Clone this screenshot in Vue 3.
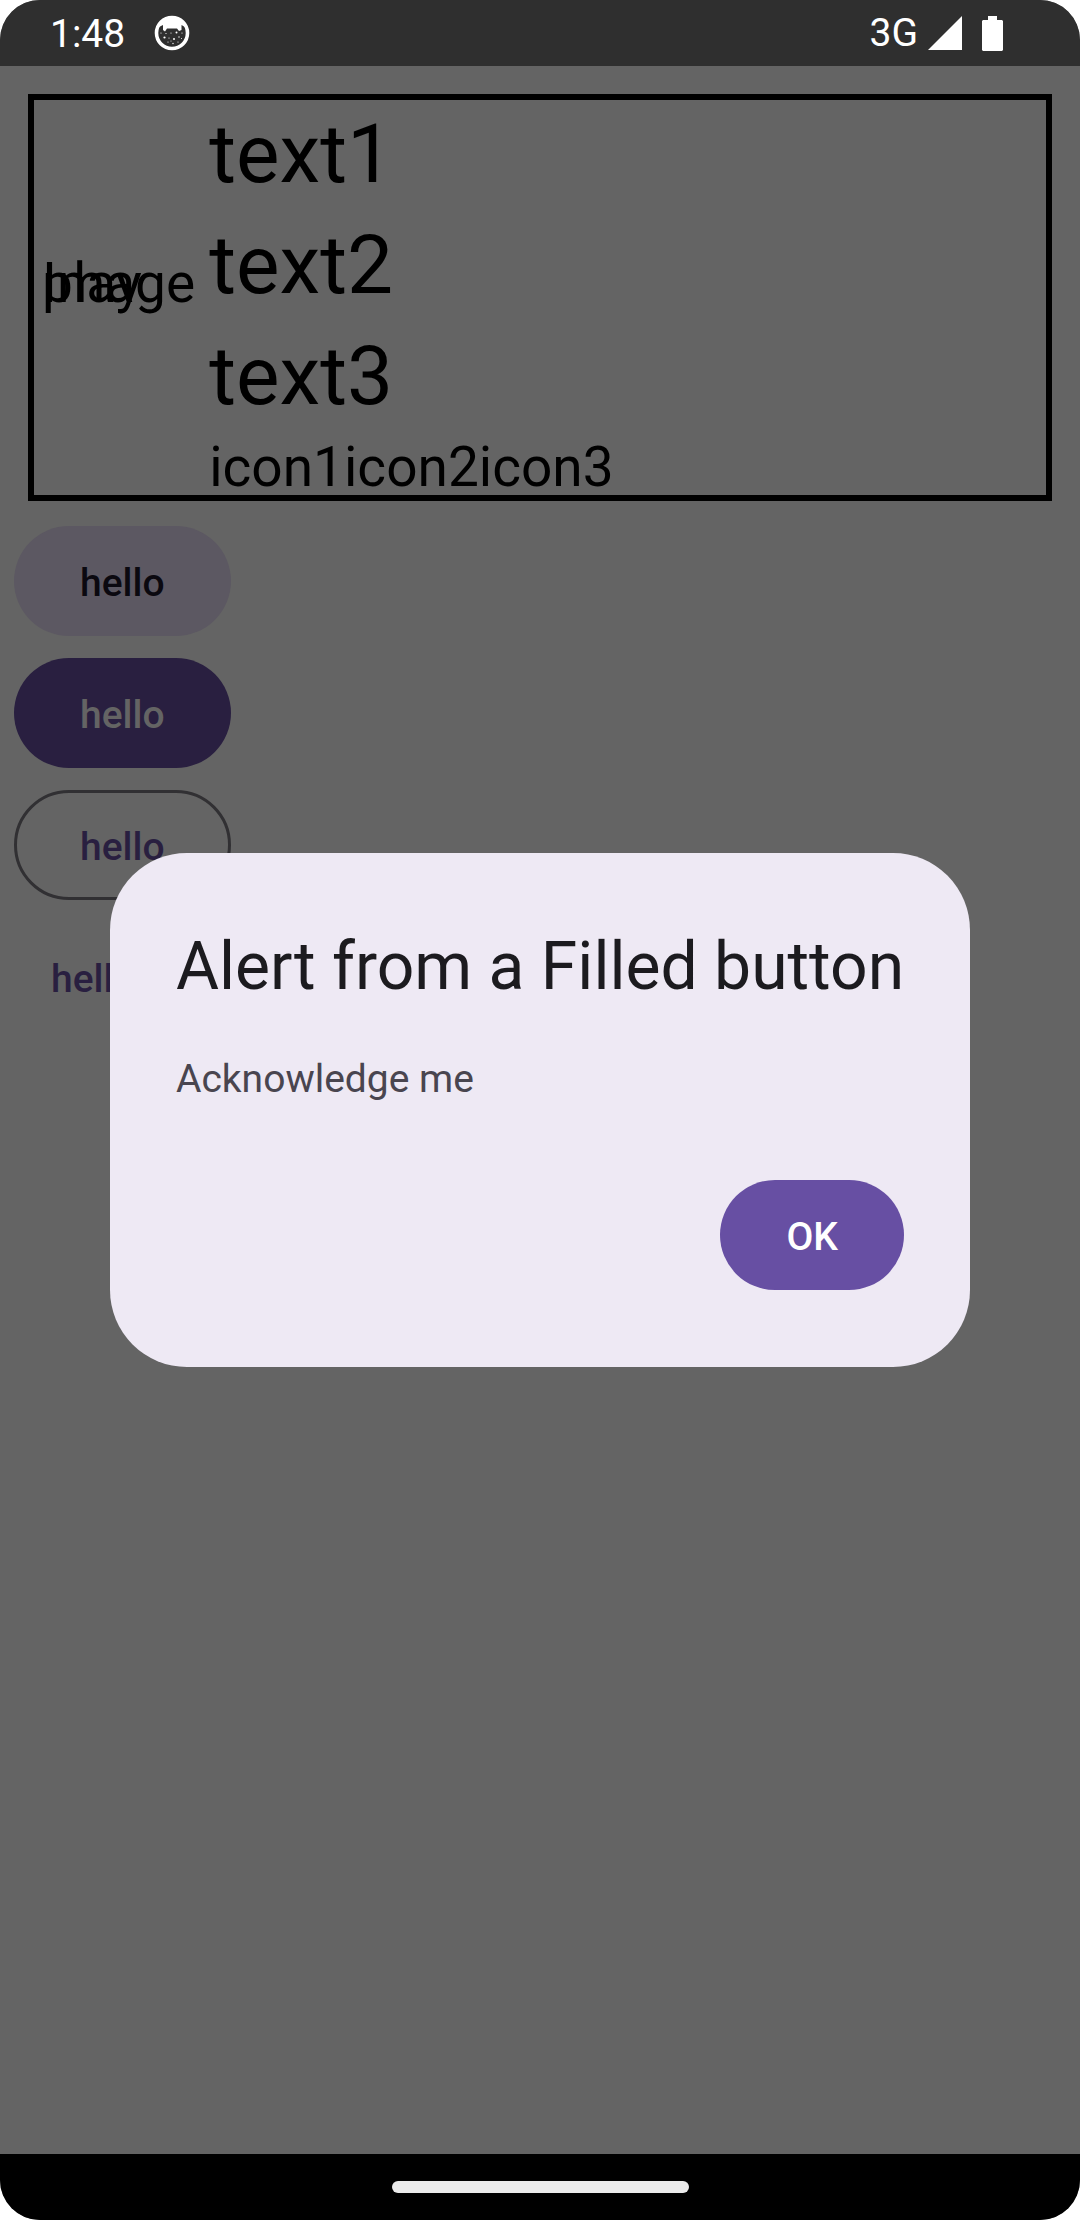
<script setup>
import { ref } from 'vue'

const overlays = ['Image', 'play']
const texts = ['text1', 'text2', 'text3']
const icons = ['icon1', 'icon2', 'icon3']
const buttons = [
  { kind: 'tonal', label: 'hello' },
  { kind: 'filled', label: 'hello' },
  { kind: 'outlined', label: 'hello' },
  { kind: 'plain', label: 'hello' }
]
const open = ref(true)
</script>

<template>
  <div class="screen">
    <header class="status">
      <div class="group">
        <time class="clock">1:48</time>
        <svg class="cat" viewBox="0 0 36 36" aria-hidden="true">
          <circle cx="18" cy="18" r="15.5" fill="none" stroke="#fff" stroke-width="3.6" />
          <path d="M5 12 Q8 2 18 1.500 Q28 2 31 12 L27.500 10 L27.500 15 L25 16 L23 13.500 H13 L11 16.500 L9 15 L9 10 Z" fill="#fff" />
          <g fill="#fff">
            <circle cx="10.500" cy="22.500" r="1.100" /><circle cx="22.500" cy="17.500" r="1" />
            <circle cx="17" cy="18" r=".6" /><circle cx="15" cy="23" r=".6" />
            <circle cx="20" cy="24" r="1" /><circle cx="25" cy="22" r=".7" />
            <circle cx="28" cy="18" r=".6" /><circle cx="7" cy="18" r=".6" />
            <circle cx="12" cy="18.500" r=".6" /><circle cx="14" cy="27" r=".6" />
            <circle cx="19" cy="28.500" r=".7" /><circle cx="24" cy="27" r=".6" />
            <circle cx="27.500" cy="23.500" r=".5" /><circle cx="17" cy="26" r=".5" />
          </g>
        </svg>
      </div>
      <div class="group">
        <span class="network">3G</span>
        <svg class="signal" viewBox="0 0 34 34" aria-hidden="true"><path d="M34 0V34H0Z" fill="#fff" /></svg>
        <svg class="battery" viewBox="0 0 21 35" aria-hidden="true">
          <path d="M6 0H15V4H20L21 5V34L20 35H1L0 34V5L1 4H6Z" fill="#fff" />
        </svg>
      </div>
    </header>

    <main class="content">
      <section class="card">
        <div class="stack">
          <span v-for="o in overlays" :key="o">{{ o }}</span>
        </div>
        <div class="column">
          <p v-for="t in texts" :key="t" class="line">{{ t }}</p>
          <p class="icons"><span v-for="i in icons" :key="i">{{ i }}</span></p>
        </div>
      </section>
      <div class="buttons">
        <button v-for="b in buttons" :key="b.kind" type="button" class="btn" :class="b.kind" @click="open = true">{{ b.label }}</button>
      </div>
    </main>

    <footer class="nav"><div class="pill"></div></footer>

    <div v-if="open" class="overlay">
      <section class="dialog" role="alertdialog" aria-labelledby="dialog-title" aria-describedby="dialog-text">
        <h1 id="dialog-title">Alert from a Filled button</h1>
        <p id="dialog-text">Acknowledge me</p>
        <div class="actions">
          <button type="button" class="btn ok" @click="open = false">OK</button>
        </div>
      </section>
    </div>
  </div>
</template>

<style>
body { margin: 0; background: #fff; }
</style>

<style scoped>
.screen {
  position: relative;
  display: flex;
  flex-direction: column;
  min-height: 100vh;
  box-sizing: border-box;
  border-radius: 40px;
  overflow: hidden;
  background: #646464;
  color: #000;
  font-family: Roboto, sans-serif;
}
p, h1 { margin: 0; font-weight: 400; }

.status {
  display: flex;
  justify-content: space-between;
  align-items: center;
  height: 66px;
  padding: 0 77px 0 50px;
  background: #2f2f2f;
  color: #fff;
}
.group { display: flex; align-items: center; }
.clock { font-size: 39px; line-height: 66px; padding-top: 2px; }
.cat { width: 36px; height: 36px; margin-left: 29px; }
.network { font: 400 39px/66px Roboto, sans-serif; }
.signal { width: 34px; height: 34px; margin-left: 10px; }
.battery { width: 21px; height: 35px; margin-left: 20px; }

.content { flex: 1; }
.card {
  display: flex;
  margin: 28px 28px 0;
  border: 6px solid #000;
}
.stack {
  display: grid;
  align-self: center;
  margin: 0 14px 29px 8px;
  font-size: 55px;
  line-height: 66px;
}
.stack span { grid-area: 1 / 1; }
.column { display: flex; flex-direction: column; gap: 3px; }
.line { font-size: 82px; line-height: 108px; }
.icons { display: flex; height: 62px; font-size: 55px; line-height: 68px; }

.buttons {
  display: flex;
  flex-direction: column;
  align-items: flex-start;
  gap: 22px;
  padding: 25px 14px;
}
.btn {
  box-sizing: border-box;
  height: 110px;
  padding: 4px 66px 0;
  border: 0;
  border-radius: 55px;
  background: none;
  font: 500 39px/55px Roboto, sans-serif;
}
.tonal { background: #5c5862; color: #0b0910; }
.filled { background: #291f40; color: #646464; }
.outlined { border: 3px solid #313033; padding: 4px 63px 0; color: #291f40; }
.plain { padding: 4px 37px 0; color: #291f40; }

.nav {
  display: flex;
  align-items: center;
  justify-content: center;
  height: 66px;
  background: #000;
}
.pill { width: 297px; height: 12px; border-radius: 6px; background: #ebebeb; }

.overlay {
  position: absolute;
  inset: 0;
  display: flex;
  align-items: center;
  justify-content: center;
}
.dialog {
  box-sizing: border-box;
  width: 860px;
  max-width: 90%;
  padding: 70px 66px 77px;
  border-radius: 77px;
  background: #eee9f4;
}
.dialog h1 { font-size: 66px; line-height: 88px; color: #1c1b1f; white-space: nowrap; }
.dialog p { margin-top: 41px; font-size: 39px; line-height: 55px; color: #49454f; }
.actions { display: flex; justify-content: flex-end; margin-top: 73px; }
.ok { background: #674fa3; color: #fff; }
</style>
